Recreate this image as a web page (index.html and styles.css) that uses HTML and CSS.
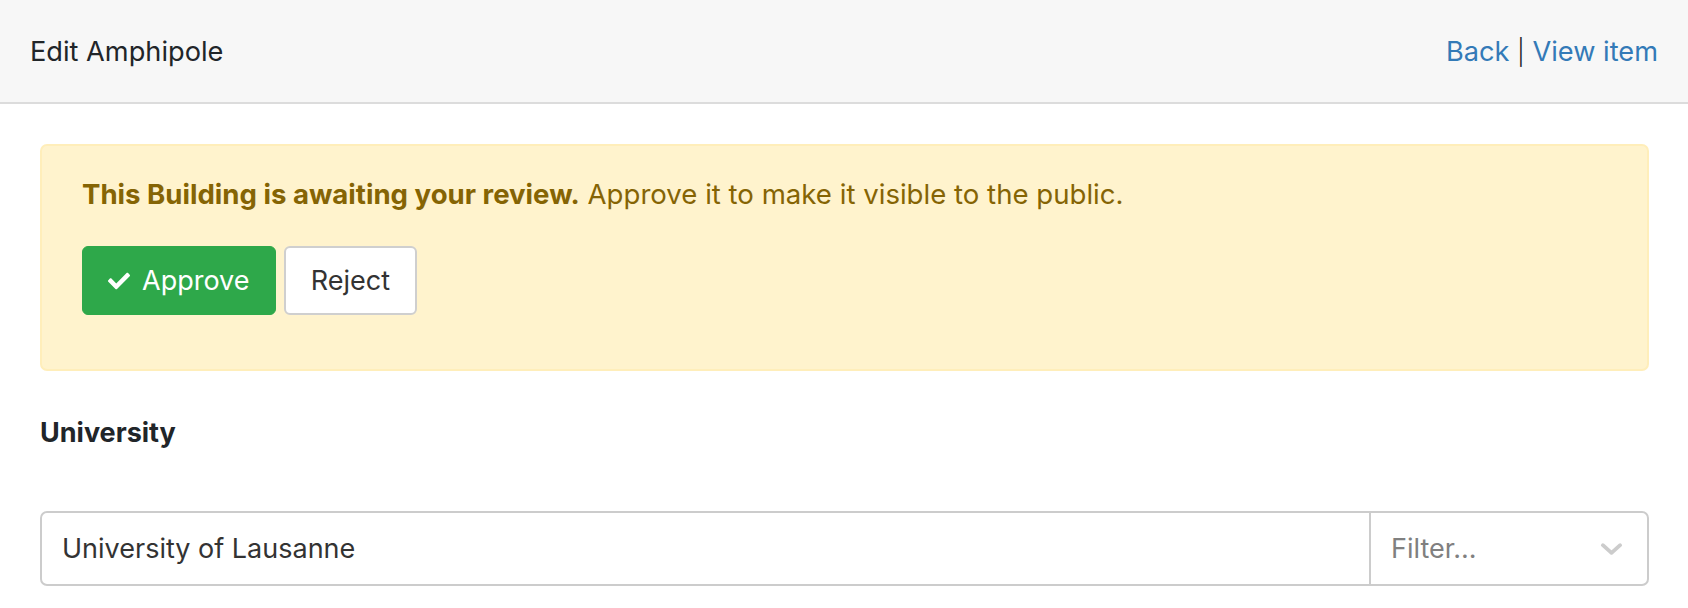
FILE: index.html
```html
<!DOCTYPE html>
<html>
<head>
<meta charset="utf-8">
<link rel="stylesheet" href="styles.css">
</head>
<body>
<header class="topbar">
  <div class="title">Edit Amphipole</div>
  <nav class="links"><a href="#">Back</a> <span class="sep">|</span> <a href="#">View item</a></nav>
</header>
<main class="content">
  <div class="alert">
    <p class="alert-text"><strong>This Building is awaiting your review.</strong> Approve it to make it visible to the public.</p>
    <div class="actions">
      <button class="btn btn-approve"><svg class="check" viewBox="0 0 512 512" width="22" height="22"><path fill="#fff" d="M173.9 439.4l-166.4-166.4c-10-10-10-26.2 0-36.2l36.2-36.2c10-10 26.2-10 36.2 0L192 312.7 432.1 72.6c10-10 26.2-10 36.2 0l36.2 36.2c10 10 10 26.2 0 36.2L210.1 439.4c-10 10-26.2 10-36.2 0z"/></svg>Approve</button>
      <button class="btn btn-reject">Reject</button>
    </div>
  </div>
  <div class="field">
    <label class="field-label">University</label>
    <div class="select">
      <div class="select-value">University of Lausanne</div>
      <div class="select-filter">
        <span class="placeholder">Filter...</span>
        <svg class="chev" viewBox="0 0 24 14" width="23" height="14"><path d="M3 3l9 8 9-8" fill="none" stroke="#cccccc" stroke-width="4" stroke-linecap="round" stroke-linejoin="round"/></svg>
      </div>
    </div>
  </div>
</main>
</body>
</html>
```

FILE: styles.css
```css
* { box-sizing: border-box; }
html, body { margin: 0; padding: 0; background: #fff; }
body {
  font-family: Inter, "Noto Sans", "Liberation Sans", sans-serif;
  font-size: 27px;
  color: #212529;
}
.topbar {
  height: 104px;
  background: #f7f7f7;
  border-bottom: 2px solid #dcdcdc;
  display: flex;
  align-items: center;
  justify-content: space-between;
  padding: 0 30px 0 30px;
}
.title { font-size: 27.2px; color: #212529; }
.links { font-size: 27.2px; color: #212529; }
.links a { color: #337ab7; text-decoration: none; }
.sep { font-weight: 300; font-size: 25px; }
.content { padding: 40px 39px 0 40px; }
.alert {
  background: #fff3cd;
  border: 2px solid #ffeeba;
  border-radius: 7px;
  padding: 28px 40px 0 40px;
  height: 227px;
  color: #856404;
}
.alert-text { margin: 0; font-size: 27.6px; line-height: 40px; }
.alert-text strong { font-weight: 700; }
.actions { display: flex; gap: 8px; margin-top: 32px; }
.btn {
  font-family: inherit;
  font-size: 27px;
  height: 69px;
  border-radius: 6px;
  display: flex;
  align-items: center;
  cursor: pointer;
}
.btn-approve {
  width: 194px;
  background: #2ea84a;
  border: 1px solid #2ea84a;
  color: #fff;
  padding: 0 0 0 25px;
}
.check { margin-right: 12px; }
.btn-reject {
  width: 133px;
  background: #fff;
  border: 2px solid #cfcfcf;
  color: #333;
  justify-content: center;
  padding: 0;
}
.field { margin-top: 42px; }
.field-label { display: block; font-weight: 700; font-size: 27px; line-height: 40px; }
.select {
  margin-top: 58px;
  height: 75px;
  border: 2px solid #cccccc;
  border-radius: 7px;
  display: flex;
}
.select-value {
  flex: 1;
  display: flex;
  align-items: center;
  padding-left: 20px;
  font-size: 27px;
  color: #333;
}
.select-filter {
  width: 278px;
  border-left: 2px solid #cccccc;
  display: flex;
  align-items: center;
  justify-content: space-between;
  padding: 0 24px 0 20px;
  font-size: 27px;
  color: #808080;
}
```
